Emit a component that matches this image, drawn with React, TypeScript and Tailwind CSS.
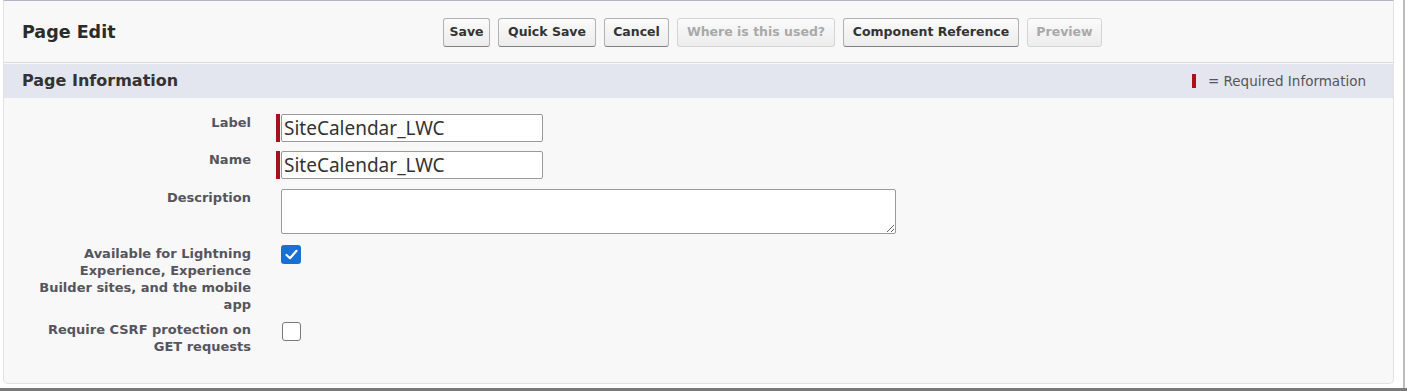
import React from 'react';

const font = "font-['DejaVu_Sans',sans-serif]";

const buttons = [
  { label: 'Save', w: 'w-[47px]', disabled: false },
  { label: 'Quick Save', w: 'w-[98px]', disabled: false },
  { label: 'Cancel', w: 'w-[65px]', disabled: false },
  { label: 'Where is this used?', w: 'w-[158px]', disabled: true },
  { label: 'Component Reference', w: 'w-[176px]', disabled: false },
  { label: 'Preview', w: 'w-[75px]', disabled: true },
];

const RequiredInput = ({ value }: { value: string }) => (
  <div className="flex h-[28px]">
    <div className="w-[4px] bg-[#a8111c]" />
    <input
      readOnly
      value={value}
      className="ml-[1px] w-[262px] h-[28px] border border-[#9a9a9a] rounded-[2px] bg-white px-[2px] text-[19px] text-[#333] outline-none font-['Noto_Sans',sans-serif]"
    />
  </div>
);

const Row = ({ label, children, className = '' }: { label: React.ReactNode; children: React.ReactNode; className?: string }) => (
  <div className={`flex ${className}`}>
    <div className="w-[247px] shrink-0 text-right text-[13px] leading-[17px] font-bold text-[#55555e]">{label}</div>
    <div className="ml-[25px]">{children}</div>
  </div>
);

export default function App() {
  return (
    <div className={`w-[1407px] h-[391px] bg-white flex flex-col overflow-hidden ${font}`}>
      <div className="flex h-[388px]">
        <div className="w-[3px]" />
        <div className="w-[1391px] h-[384px] bg-[#f8f8f8] border-t border-t-[#b4b4c6] border-x border-b border-[#e2e2e2] rounded-b-[5px] flex flex-col">
          {/* header */}
          <div className="h-[62px] pt-[2px] flex items-center border-b border-[#dcdcdc]">
            <div className="w-[439px] shrink-0 pl-[18px] text-[17.5px] font-bold text-[#2b2b2b]">Page Edit</div>
            <div className="flex items-center gap-[8px]">
              {buttons.map((b) => (
                <div
                  key={b.label}
                  className={`${b.w} h-[29px] flex items-center justify-center rounded-[3px] border text-[12.5px] font-bold bg-gradient-to-b from-[#fbfbfb] to-[#ececec] ${
                    b.disabled
                      ? 'border-[#d4d4d4] text-[#a9a9a9]'
                      : 'border-[#b2b2b2] border-b-[#808080] text-[#333]'
                  }`}
                >
                  {b.label}
                </div>
              ))}
            </div>
          </div>
          {/* sub header */}
          <div className="mt-[1px] h-[34px] bg-[#e3e6ef] flex items-center justify-between pl-[18px] pr-[27px]">
            <div className="text-[16px] font-bold text-[#333]">Page Information</div>
            <div className="flex items-center text-[13.5px] text-[#555]">
              <div className="w-[4px] h-[14px] bg-[#a8111c] mr-[12px]" />= Required Information
            </div>
          </div>
          {/* form */}
          <div className="pt-[16px] flex flex-col">
            <Row label="Label">
              <RequiredInput value="SiteCalendar_LWC" />
            </Row>
            <Row label="Name" className="mt-[9px]">
              <RequiredInput value="SiteCalendar_LWC" />
            </Row>
            <Row label="Description" className="mt-[10px]">
              <textarea className="ml-[5px] block w-[615px] h-[45px] border border-[#9a9a9a] rounded-[2px] bg-white outline-none" />
            </Row>
            <Row
              className="mt-[11px]"
              label={
                <>
                  Available for Lightning
                  <br />
                  Experience, Experience
                  <br />
                  Builder sites, and the mobile
                  <br />
                  app
                </>
              }
            >
              <div className="ml-[5px] w-[20px] h-[19px] rounded-[3px] bg-[#1a6fd4] flex items-center justify-center">
                <svg width="13" height="11" viewBox="0 0 13 11">
                  <path d="M1.5 6 L5 9.2 L11.5 1.8" fill="none" stroke="white" strokeWidth="2.2" strokeLinecap="round" strokeLinejoin="round" />
                </svg>
              </div>
            </Row>
            <Row
              className="mt-[8px]"
              label={
                <>
                  Require CSRF protection on
                  <br />
                  GET requests
                </>
              }
            >
              <div className="ml-[6px] mt-[1px] w-[19px] h-[19px] rounded-[3px] bg-white border border-[#7a7a7a]" />
            </Row>
          </div>
        </div>
        <div className="w-[9px]" />
        <div className="w-[2px] bg-[#bdbdbd]" />
      </div>
      <div className="h-[3px] bg-[#7b7b7b]" />
    </div>
  );
}
